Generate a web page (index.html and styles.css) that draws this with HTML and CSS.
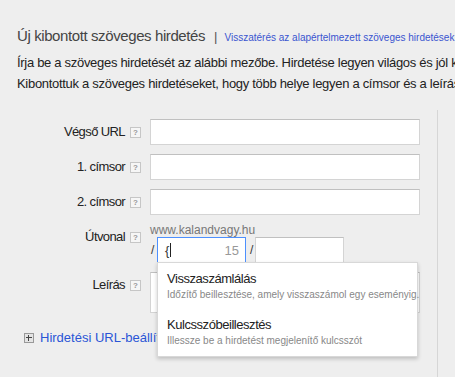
FILE: index.html
```html
<!DOCTYPE html>
<html lang="hu">

<head>
    <meta charset="UTF-8">
    <meta name="viewport" content="width=device-width, initial-scale=1.0">
    <title>Új kibontott szöveges hirdetés</title>
    <link rel="stylesheet" href="styles.css">
</head>

<body>

    <div class="page">
        <div class="intro">
            <div class="title-row">
                <span class="title">Új kibontott szöveges hirdetés</span>
                <span class="sep">|</span>
                <a class="revert" href="#">Visszatérés az alapértelmezett szöveges hirdetések használatához</a>
            </div>
            <p class="lead">Írja be a szöveges hirdetését az alábbi mezőbe. Hirdetése legyen világos és jól követhető.</p>
            <p class="lead">Kibontottuk a szöveges hirdetéseket, hogy több helye legyen a címsor és a leírás szövegének.</p>
        </div>

        <div class="content">
            <div class="form">
                <div class="form-row">
                    <label class="form-label">Végső URL</label>
                    <span class="help">?</span>
                    <input class="text-input" type="text">
                </div>
                <div class="form-row">
                    <label class="form-label">1. címsor</label>
                    <span class="help">?</span>
                    <input class="text-input" type="text">
                </div>
                <div class="form-row">
                    <label class="form-label">2. címsor</label>
                    <span class="help">?</span>
                    <input class="text-input" type="text">
                </div>
                <div class="form-row">
                    <label class="form-label">Útvonal</label>
                    <span class="help">?</span>
                    <div class="path">
                        <div class="path-domain">www.kalandvagy.hu</div>
                        <div class="path-fields">
                            <span class="slash">/</span>
                            <div class="path-box focused">
                                <span class="path-value">{<span class="caret"></span></span>
                                <span class="path-count">15</span>
                                <!-- autocomplete for the open brace -->
                                <div class="suggest">
                                    <div class="suggest-item">
                                        <div class="suggest-title">Visszaszámlálás</div>
                                        <div class="suggest-desc">Időzítő beillesztése, amely visszaszámol egy eseményig.</div>
                                    </div>
                                    <div class="suggest-item">
                                        <div class="suggest-title">Kulcsszóbeillesztés</div>
                                        <div class="suggest-desc">Illessze be a hirdetést megjelenítő kulcsszót</div>
                                    </div>
                                </div>
                            </div>
                            <span class="slash">/</span>
                            <div class="path-box"></div>
                        </div>
                    </div>
                </div>
                <div class="form-row">
                    <label class="form-label">Leírás</label>
                    <span class="help">?</span>
                    <textarea class="text-area"></textarea>
                </div>

                <div class="more">
                    <span class="expander"></span>
                    <a href="#" class="more-link">Hirdetési URL-beállítások</a>
                </div>
            </div>
            <div class="side"></div>
        </div>
    </div>

</body>

</html>
```

FILE: styles.css
```css
html,
body {
    margin: 0;
    height: 100%;
}

body {
    background-color: #eeeeee;
    font-family: Arial, "Liberation Sans", sans-serif;
    color: #222;
    overflow: hidden;
}

.page {
    height: 100%;
    display: flex;
    flex-direction: column;
    white-space: nowrap;
    overflow: hidden;
}

.intro {
    padding: 27px 0 0 17px;
}

.title-row {
    display: flex;
    align-items: baseline;
    height: 20px;
}

.title {
    font-size: 15px;
    letter-spacing: -0.4px;
    color: #444;
}

.sep {
    margin: 0 7px 0 9px;
    font-size: 13px;
    color: #555;
}

.revert {
    font-size: 10px;
    color: #3a55d0;
    text-decoration: none;
}

.lead {
    margin: 0;
    font-size: 13px;
    letter-spacing: -0.3px;
    line-height: 21px;
}

.intro .lead:first-of-type {
    margin-top: 5px;
}

.content {
    flex: 1;
    display: flex;
    margin-top: 16px;
}

.form {
    width: 437px;
    padding-top: 9px;
    border-right: 1px solid #d6d6d6;
    flex-shrink: 0;
}

.side {
    flex: 1;
}

.form-row {
    display: flex;
    align-items: flex-start;
    margin-bottom: 9px;
}

.form-label {
    width: 125px;
    text-align: right;
    font-size: 13px;
    letter-spacing: -0.6px;
    line-height: 26px;
    color: #222;
}

.help {
    width: 9px;
    height: 9px;
    margin: 8px 9px 0 5px;
    border: 1px solid #c6c6c6;
    background-color: #f6f6f6;
    color: #999;
    font-size: 8px;
    font-weight: bold;
    line-height: 9px;
    text-align: center;
}

.text-input {
    width: 270px;
    height: 26px;
    box-sizing: border-box;
    margin: 0;
    padding: 0 6px;
    border: 1px solid #d4d4d4;
    border-top-color: #c0c0c0;
    background-color: #fff;
}

.text-area {
    width: 270px;
    height: 41px;
    box-sizing: border-box;
    margin: 0;
    border: 1px solid #d4d4d4;
    border-top-color: #c0c0c0;
    background-color: #fff;
    resize: none;
}

.path-domain {
    font-size: 12px;
    line-height: 13px;
    color: #777;
}

.path-fields {
    display: flex;
    align-items: center;
}

.slash {
    width: 6px;
    padding-left: 1px;
    font-size: 12px;
    color: #333;
}

.path-fields .path-box + .slash {
    width: 5px;
    padding-left: 4px;
}

.path-box {
    position: relative;
    width: 89px;
    height: 26px;
    box-sizing: border-box;
    border: 1px solid #d4d4d4;
    border-top-color: #c0c0c0;
    background-color: #fff;
    display: flex;
    align-items: center;
    justify-content: space-between;
    padding: 0 6px 0 7px;
}

.path-box.focused {
    border-color: #4d90fe;
}

.path-value {
    font-size: 13px;
    color: #333;
    display: flex;
    align-items: center;
}

.caret {
    width: 1px;
    height: 14px;
    margin-left: 1px;
    background-color: #222;
}

.path-count {
    font-size: 13px;
    color: #999;
}

.suggest {
    position: absolute;
    top: 100%;
    left: -1px;
    width: 261px;
    box-sizing: border-box;
    padding-top: 1px;
    background-color: #fff;
    border: 1px solid #d8d8d8;
    box-shadow: 0 2px 4px rgba(0, 0, 0, 0.2);
    z-index: 100;
}

.suggest-item {
    padding: 6px 9px 8px;
}

.suggest-title {
    font-size: 13px;
    letter-spacing: -0.45px;
    line-height: 18px;
    color: #222;
}

.suggest-desc {
    font-size: 10px;
    line-height: 14px;
    color: #888;
}

.more {
    display: flex;
    align-items: center;
    margin-top: 17px;
    padding-left: 24px;
}

.expander {
    position: relative;
    width: 8px;
    height: 8px;
    border: 1px solid #999;
    background-color: #e4e4e4;
    margin-right: 6px;
}

.expander::before,
.expander::after {
    content: "";
    position: absolute;
    background-color: #444;
}

.expander::before {
    left: 1px;
    right: 1px;
    top: 3px;
    height: 1px;
}

.expander::after {
    top: 1px;
    bottom: 1px;
    left: 3px;
    width: 1px;
}

.more-link {
    font-size: 13px;
    color: #2a55d6;
    text-decoration: none;
}
```
